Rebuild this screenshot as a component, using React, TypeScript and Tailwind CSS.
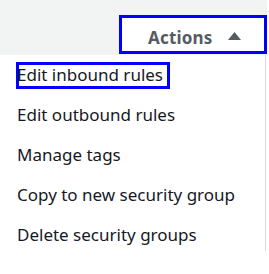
const items = [
  "Edit inbound rules",
  "Edit outbound rules",
  "Manage tags",
  "Copy to new security group",
  "Delete security groups",
];

export default function App() {
  return (
    <div
      className="w-[269px] h-[274px] bg-white overflow-hidden"
      style={{ fontFamily: '"Noto Sans", "Open Sans", sans-serif' }}
    >
      {/* header strip with the Actions button */}
      <div className="h-[55px] w-[267px] bg-[#f2f3f3] flex justify-end items-start pt-[15px]">
        <button className="w-[148px] h-[39px] border-[3px] border-[#0000ff] bg-white flex items-center pl-[26px] pt-[5px] gap-[15px] text-[17px] leading-none font-bold tracking-[0.2px] text-[#545b64]">
          <span>Actions</span>
          <svg width="13" height="8" viewBox="0 0 13 8" className="-mt-[2px]">
            <path d="M6.5 0 L13 8 L0 8 Z" fill="#545b64" />
          </svg>
        </button>
      </div>

      {/* dropdown menu */}
      <div className="w-[266px] h-[196px] border-r border-[#d5dbdb]">
        {items.map((label, i) => (
          <div key={label} className="h-[40px] flex items-center pl-[16px] text-[17px] text-[#16191f]">
            {i === 0 ? (
              <span className="border-[3px] border-[#0000ff] h-[27px] w-[154px] flex items-center">
                <span className="-ml-[2px]">{label}</span>
              </span>
            ) : (
              <span className="pl-[1px]">{label}</span>
            )}
          </div>
        ))}
      </div>
    </div>
  );
}
